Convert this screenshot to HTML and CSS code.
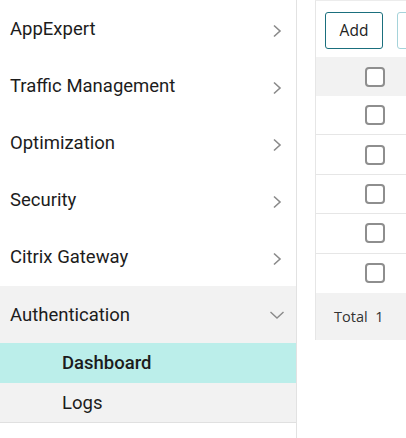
FILE: index.html
```html
<!DOCTYPE html>
<html>
<head>
<meta charset="utf-8">
<link rel="stylesheet" href="styles.css">
</head>
<body>
<div class="page">
  <nav class="sidebar">
    <div class="item"><span>AppExpert</span><svg class="chev" width="10" height="14" viewBox="0 0 10 14"><path d="M2 1.5 L8 7 L2 12.5" fill="none" stroke="#8a8a8a" stroke-width="1.6"/></svg></div>
    <div class="item"><span>Traffic Management</span><svg class="chev" width="10" height="14" viewBox="0 0 10 14"><path d="M2 1.5 L8 7 L2 12.5" fill="none" stroke="#8a8a8a" stroke-width="1.6"/></svg></div>
    <div class="item"><span>Optimization</span><svg class="chev" width="10" height="14" viewBox="0 0 10 14"><path d="M2 1.5 L8 7 L2 12.5" fill="none" stroke="#8a8a8a" stroke-width="1.6"/></svg></div>
    <div class="item"><span>Security</span><svg class="chev" width="10" height="14" viewBox="0 0 10 14"><path d="M2 1.5 L8 7 L2 12.5" fill="none" stroke="#8a8a8a" stroke-width="1.6"/></svg></div>
    <div class="item"><span>Citrix Gateway</span><svg class="chev" width="10" height="14" viewBox="0 0 10 14"><path d="M2 1.5 L8 7 L2 12.5" fill="none" stroke="#8a8a8a" stroke-width="1.6"/></svg></div>
    <div class="group">
      <div class="item open"><span>Authentication</span><svg class="chevd" width="16" height="10" viewBox="0 0 16 10"><path d="M1.5 2 L8 8 L14.5 2" fill="none" stroke="#8a8a8a" stroke-width="1.4"/></svg></div>
      <div class="sub active">Dashboard</div>
      <div class="sub">Logs</div>
    </div>
  </nav>
  <main class="main">
    <div class="panel">
      <div class="toolbar">
        <button class="btn">Add</button>
        <button class="btn disabled" aria-label="Edit"></button>
      </div>
      <div class="row head"><div class="cell"><span class="cb"></span></div></div>
      <div class="row"><div class="cell"><span class="cb"></span></div></div>
      <div class="row"><div class="cell"><span class="cb"></span></div></div>
      <div class="row"><div class="cell"><span class="cb"></span></div></div>
      <div class="row"><div class="cell"><span class="cb"></span></div></div>
      <div class="row last"><div class="cell"><span class="cb"></span></div></div>
      <div class="footer">Total&nbsp; 1</div>
    </div>
  </main>
</div>
</body>
</html>
```
FILE: styles.css
```css
html, body {
  margin: 0;
  padding: 0;
  background: #fff;
  overflow: hidden;
}
body {
  font-family: Roboto, "Liberation Sans", sans-serif;
  color: #1c1c1c;
  width: 406px;
  height: 438px;
}
.page {
  display: flex;
  height: 438px;
}
.sidebar {
  width: 296px;
  flex: none;
  border-right: 1px solid #e2e2e2;
  padding-top: 1px;
  box-sizing: content-box;
}
.item {
  height: 57px;
  display: flex;
  align-items: center;
  justify-content: space-between;
  padding: 0 14px 0 10px;
  font-size: 18.5px;
}
.item span { margin-top: -1px; }
.chev { margin-top: 2px; }
.chevd { margin-right: -3px; }
.group {
  background: #f2f2f2;
  border-bottom: 1px solid #e0e0e0;
}
.item.open span { margin-top: 0; }
.sub {
  height: 40px;
  display: flex;
  align-items: center;
  padding-left: 62px;
  font-size: 18.5px;
}
.sub.active {
  background: #bbeeea;
  font-weight: 500;
}
.sub:last-child { height: 39px; }
.main {
  flex: 1;
  padding-left: 18px;
  min-width: 0;
}
.panel {
  width: 400px;
  border-left: 1px solid #e6e6e6;
  border-top: 1px solid #ececec;
}
.toolbar {
  height: 56px;
  display: flex;
  align-items: center;
  gap: 14px;
  padding-left: 9px;
  box-sizing: border-box;
}
.btn {
  height: 37px;
  width: 58px;
  border: 1px solid #1a6f7d;
  border-radius: 3px;
  background: #fff;
  font-family: "Open Sans", sans-serif;
  font-size: 15.5px;
  color: #222;
  padding: 0;
  margin-top: 2px;
}
.btn.disabled {
  border-color: #a5d3da;
}
.row {
  height: 39.4px;
  border-bottom: 1px solid #e6e6e6;
  box-sizing: border-box;
  display: flex;
  align-items: center;
}
.row.head {
  height: 39px;
  background: #f2f2f2;
  border-bottom: none;
}
.row.last { border-bottom: none; }
.cell {
  width: 117px;
  display: flex;
  justify-content: center;
}
.cb {
  width: 16px;
  height: 16px;
  border: 2px solid #8e8e8e;
  border-radius: 4px;
  background: #fff;
}
.footer {
  height: 47px;
  background: #f2f2f2;
  display: flex;
  align-items: center;
  padding-left: 18px;
  font-family: "Open Sans", sans-serif;
  font-size: 14.5px;
  color: #333;
}
```
